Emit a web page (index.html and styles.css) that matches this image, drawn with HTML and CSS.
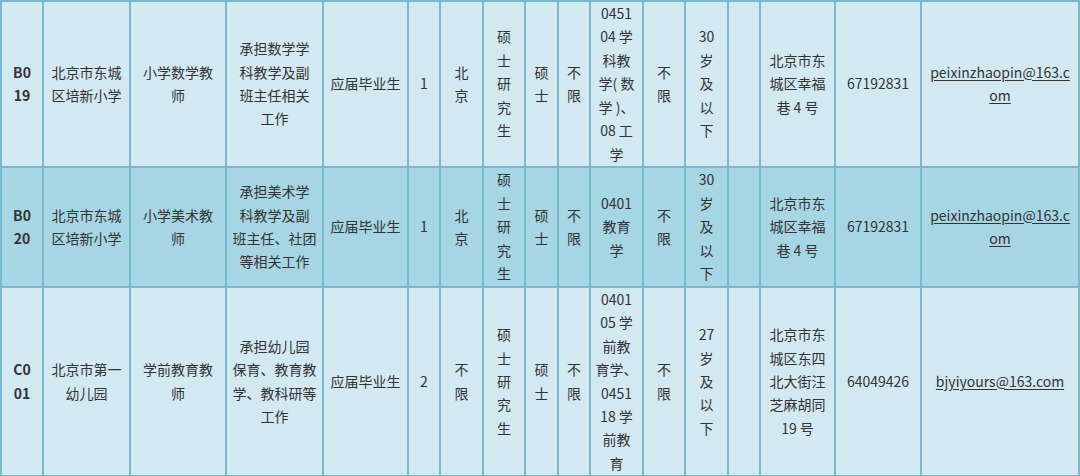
FILE: index.html
```html
<!DOCTYPE html>
<html lang="zh-CN">
<head>
<meta charset="utf-8">
<title>招聘岗位表</title>
<link rel="stylesheet" href="styles.css">
</head>
<body>
<table class="jobs">
  <colgroup>
    <col class="c-code"><col class="c-unit"><col class="c-post"><col class="c-duty"><col class="c-src">
    <col class="c-num"><col class="c-place"><col class="c-edu"><col class="c-deg"><col class="c-any1">
    <col class="c-major"><col class="c-any2"><col class="c-age"><col class="c-blank"><col class="c-addr">
    <col class="c-tel"><col class="c-mail">
  </colgroup>
  <tbody>
    <tr class="row r1">
      <td class="code">B0<br>19</td>
      <td>北京市东城<br>区培新小学</td>
      <td>小学数学教<br>师</td>
      <td>承担数学学<br>科教学及副<br>班主任相关<br>工作</td>
      <td>应届毕业生</td>
      <td>1</td>
      <td>北<br>京</td>
      <td>硕<br>士<br>研<br>究<br>生</td>
      <td>硕<br>士</td>
      <td>不<br>限</td>
      <td>0451<br>04 学<br>科教<br>学( 数<br>学 )、<br>08 工<br>学</td>
      <td>不<br>限</td>
      <td>30<br>岁<br>及<br>以<br>下</td>
      <td></td>
      <td>北京市东<br>城区幸福<br>巷 4 号</td>
      <td>67192831</td>
      <td><span class="mail">peixinzhaopin@163.c<br>om</span></td>
    </tr>
    <tr class="row r2 alt">
      <td class="code">B0<br>20</td>
      <td>北京市东城<br>区培新小学</td>
      <td>小学美术教<br>师</td>
      <td>承担美术学<br>科教学及副<br>班主任、社团<br>等相关工作</td>
      <td>应届毕业生</td>
      <td>1</td>
      <td>北<br>京</td>
      <td>硕<br>士<br>研<br>究<br>生</td>
      <td>硕<br>士</td>
      <td>不<br>限</td>
      <td>0401<br>教育<br>学</td>
      <td>不<br>限</td>
      <td>30<br>岁<br>及<br>以<br>下</td>
      <td></td>
      <td>北京市东<br>城区幸福<br>巷 4 号</td>
      <td>67192831</td>
      <td><span class="mail">peixinzhaopin@163.c<br>om</span></td>
    </tr>
    <tr class="row r3">
      <td class="code">C0<br>01</td>
      <td>北京市第一<br>幼儿园</td>
      <td>学前教育教<br>师</td>
      <td>承担幼儿园<br>保育、教育教<br>学、教科研等<br>工作</td>
      <td>应届毕业生</td>
      <td>2</td>
      <td>不<br>限</td>
      <td>硕<br>士<br>研<br>究<br>生</td>
      <td>硕<br>士</td>
      <td>不<br>限</td>
      <td>0401<br>05 学<br>前教<br>育学、<br>0451<br>18 学<br>前教<br>育</td>
      <td>不<br>限</td>
      <td>27<br>岁<br>及<br>以<br>下</td>
      <td></td>
      <td>北京市东<br>城区东四<br>北大街汪<br>芝麻胡同<br>19 号</td>
      <td>64049426</td>
      <td><span class="mail">bjyiyours@163.com</span></td>
    </tr>
  </tbody>
</table>
</body>
</html>
```

FILE: styles.css
```css
html, body {
  margin: 0;
  padding: 0;
  background: #d2e9f1;
}

.jobs {
  width: 1080px;
  table-layout: fixed;
  border-collapse: collapse;
  border: 2px solid #79b8cb;
  font-family: "Noto Sans CJK SC", "Noto Sans", sans-serif;
  font-size: 14px;
  line-height: 23.4px;
  color: #333;
}

.jobs td {
  border: 2px solid #79b8cb;
  padding: 0;
  text-align: center;
  vertical-align: middle;
  background: #d2e9f1;
  overflow: hidden;
  white-space: nowrap;
}

.jobs .alt td {
  background: #a6d5e3;
}

.r1 { height: 166px; }
.r2 { height: 120px; }
.r3 { height: 188px; }

.code { font-weight: bold; }

.mail { text-decoration: underline; text-underline-offset: 2px; }

.c-code { width: 42px; }
.c-unit { width: 87px; }
.c-post { width: 96px; }
.c-duty { width: 97px; }
.c-src { width: 85px; }
.c-num { width: 32px; }
.c-place { width: 43px; }
.c-edu { width: 42px; }
.c-deg { width: 33px; }
.c-any1 { width: 32px; }
.c-major { width: 53px; }
.c-any2 { width: 42px; }
.c-age { width: 43px; }
.c-blank { width: 32px; }
.c-addr { width: 75px; }
.c-tel { width: 86px; }
.c-mail { width: 158px; }
```
